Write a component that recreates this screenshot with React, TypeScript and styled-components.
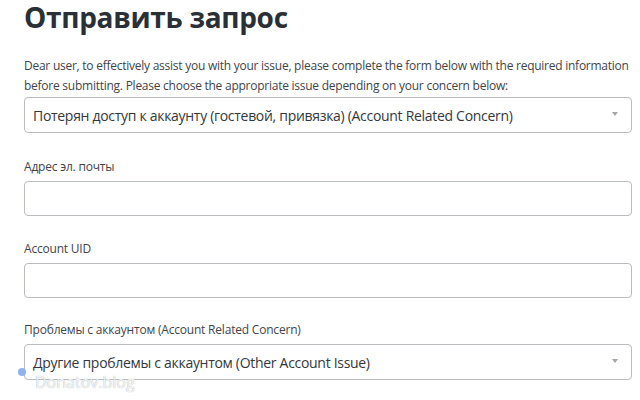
import React from "react";
import styled, { createGlobalStyle } from "styled-components";

const GlobalStyle = createGlobalStyle`
  html, body {
    margin: 0;
    padding: 0;
    background: #ffffff;
  }
  body {
    font-family: "Open Sans", "Noto Sans", Arial, sans-serif;
    overflow: hidden;
  }
`;

const Page = styled.div`
  position: relative;
  width: 640px;
  height: 400px;
  box-sizing: border-box;
  padding: 0 8px 0 24px;
  overflow: hidden;
`;

const Title = styled.h1`
  margin: -2px 0 0;
  font-size: 28px;
  line-height: 38px;
  font-weight: 700;
  letter-spacing: -0.3px;
  color: #2b3036;
`;

const Intro = styled.p`
  margin: 20px 0 0;
  font-size: 12px;
  line-height: 20px;
  color: #3f4449;
  letter-spacing: -0.25px;
  white-space: nowrap;
`;

const Field = styled.div<{ $gap: number }>`
  margin-top: ${(p) => p.$gap}px;
  display: flex;
  flex-direction: column;
`;

const Label = styled.label`
  font-size: 12px;
  line-height: 16px;
  color: #3f4449;
  margin-bottom: 6px;
  letter-spacing: -0.2px;
`;

const Box = styled.div<{ $h?: number }>`
  height: ${(p) => p.$h ?? 35}px;
  box-sizing: border-box;
  border: 1px solid #b9bdc1;
  border-radius: 4px;
  background: #ffffff;
  display: flex;
  align-items: center;
  padding: 0 13px 0 8px;
`;

const BoxText = styled.span`
  flex: 1;
  font-size: 14px;
  color: #33383d;
  letter-spacing: -0.3px;
`;

const Caret = styled.span`
  width: 0;
  height: 0;
  margin-top: -2px;
  border-left: 3px solid transparent;
  border-right: 3px solid transparent;
  border-top: 4px solid #a3a7ab;
`;

const Watermark = styled.div`
  position: absolute;
  left: 18px;
  top: 368px;
  display: flex;
  align-items: flex-start;
  gap: 9px;
`;

const Dot = styled.span`
  width: 8px;
  height: 8px;
  border-radius: 50%;
  background: #8fb3ef;
`;

const WatermarkText = styled.span`
  margin-top: 4px;
  font-size: 16px;
  line-height: 20px;
  color: rgba(255, 255, 255, 0.85);
  text-shadow: 0 0 1px rgba(120, 130, 145, 0.75);
`;

function Select({ value, h }: { value: string; h?: number }) {
  return (
    <Box $h={h}>
      <BoxText>{value}</BoxText>
      <Caret />
    </Box>
  );
}

export default function App() {
  return (
    <Page>
      <GlobalStyle />
      <Title>Отправить запрос</Title>
      <Intro>
        Dear user, to effectively assist you with your issue, please complete the form below with the required information
        <br />
        before submitting. Please choose the appropriate issue depending on your concern below:
      </Intro>
      <Field $gap={1}>
        <Select h={36} value="Потерян доступ к аккаунту (гостевой, привязка) (Account Related Concern)" />
      </Field>
      <Field $gap={26}>
        <Label>Адрес эл. почты</Label>
        <Box />
      </Field>
      <Field $gap={25}>
        <Label>Account UID</Label>
        <Box />
      </Field>
      <Field $gap={24}>
        <Label>Проблемы с аккаунтом (Account Related Concern)</Label>
        <Select h={36} value="Другие проблемы с аккаунтом (Other Account Issue)" />
      </Field>
      <Watermark>
        <Dot />
        <WatermarkText>Donatov.blog</WatermarkText>
      </Watermark>
    </Page>
  );
}
